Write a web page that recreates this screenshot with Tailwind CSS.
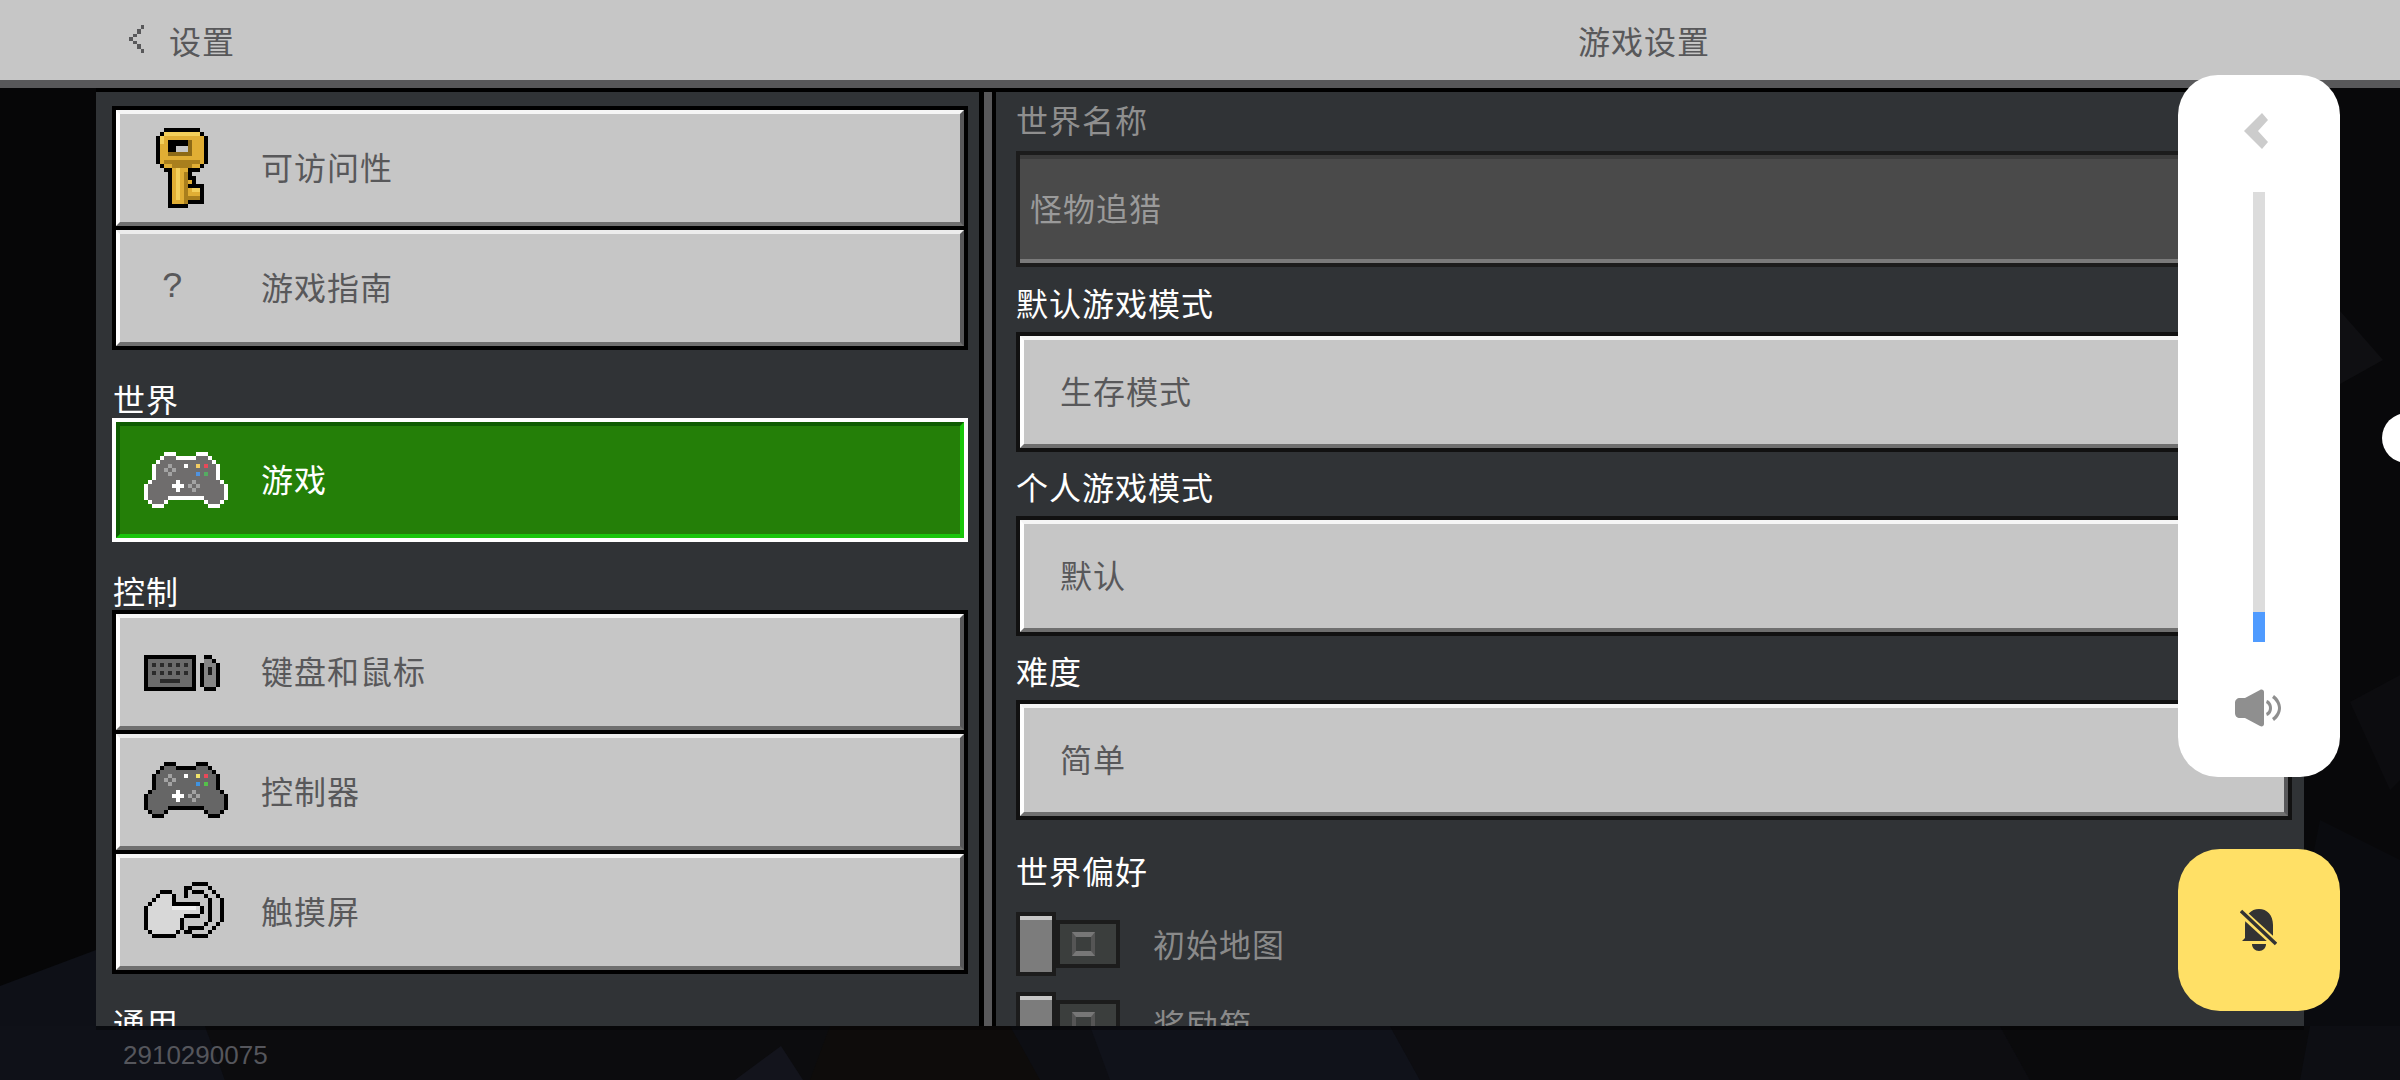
<!doctype html>
<html>
<head>
<meta charset="utf-8">
<script src="https://cdn.jsdelivr.net/npm/@tailwindcss/browser@4"></script>
</head>
<body class="m-0 bg-[#050506]">
<div class="relative w-[2400px] h-[1080px] overflow-hidden bg-[#060607] font-['Noto_Sans_CJK_SC','Noto_Sans',sans-serif] text-[32px] leading-none font-normal tracking-[1px]">

  <!-- blurred world behind the menu -->
  <svg class="absolute left-0 top-0" width="2400" height="1080" viewBox="0 0 2400 1080">
    <polygon points="0,986 96,950 96,1080 0,1080" fill="#0e1017"/>
    <polygon points="2304,88 2400,88 2400,1026 2304,1026" fill="#08080a"/>
    <polygon points="2340,311 2383,360 2340,384" fill="#0f0f12"/>
    <polygon points="2350,702 2400,675 2400,780 2390,790" fill="#0c0c0f"/>
    <polygon points="2320,820 2400,860 2400,1026 2304,1026 2304,900" fill="#0a0b0f"/>
  </svg>

  <!-- header -->
  <header class="relative flex h-[88px] bg-[#c6c6c6] border-b-8 border-[#58585a] text-[#58585a]">
    <div class="flex items-center w-[995px] pl-[128px]">
      <svg width="17" height="28" viewBox="0 0 17 28" fill="#58585a" shape-rendering="crispEdges" class="-mt-[2px]">
        <path d="M13 0h3v4h-3zM9 4h4v5H9zM5 9h4v3H5zM1 12h4v4H1zM5 16h4v3H5zM9 19h4v5H9zM13 24h3v4h-3z"/>
      </svg>
      <span class="ml-6">设置</span>
    </div>
    <div class="flex-1 flex items-center pl-[583px]">游戏设置</div>
  </header>

  <!-- settings columns -->
  <main class="relative flex h-[938px] ml-[96px] w-[2208px] border-t-4 border-black">
    <nav class="w-[883px] h-full overflow-hidden bg-[#303336] pt-[14px] pl-4 pr-[11px] text-white">
      <div class="bg-black pt-1">
        <a class="flex items-center mx-1 h-[116px] border-4 border-t-[#f5f5f5] border-l-white border-r-[#58585a] border-b-[#6f6f6f] bg-[#c6c6c6] text-[#58585a]">
          <span class="flex w-[141px] shrink-0 pl-[36px]">
            <svg width="52" height="80" viewBox="0 0 13 20" shape-rendering="crispEdges">
              <path fill="#000" d="M2 0H11V1H12V2H13V9H12V10H11V11H9V12H10V14H12V19H8V20H3V11H2V10H1V9H0V2H1V1H2Z"/>
              <path fill="#e0ae34" d="M2 1H11V2H12V9H11V10H8V13H9V14H8V15H11V18H8V19H4V10H2V9H1V2H2Z"/>
              <path fill="#f3cf5a" d="M2 1h9v1H2zM1 2h1v2H1zM5 10h1v8H5zM9 15h2v1H9z"/>
              <path fill="#a97f1d" d="M2 8h9v1H9v1H4V9H2zM7 11h1v8H7zM8 17h3v1H8z"/>
              <path fill="#000" d="M3 3h6v4H3z"/>
              <path fill="#8d6a17" d="M8 3h1v4H8zM3 6h6v1H3z"/>
              <path fill="#c6c6c6" d="M5 4.5h3V6H5z"/>
            </svg>
          </span>
          <span class="pb-[4px]">可访问性</span>
        </a>
        <div class="h-[4px]"></div>
        <a class="flex items-center mx-1 h-[116px] border-4 border-t-[#ececec] border-l-white border-r-[#58585a] border-b-[#6f6f6f] bg-[#c6c6c6] text-[#58585a]">
          <span class="flex w-[141px] shrink-0 pl-[42px] text-[36px] font-['Liberation_Mono',monospace]">?</span>
          <span class="pb-[4px]">游戏指南</span>
        </a>
        <div class="h-[4px]"></div>
      </div>

      <h3 class="flex items-end h-[68px] pb-[4px] pl-[1px]">世界</h3>
      <a class="block w-[856px] h-[124px] border-4 border-white">
        <span class="flex items-center h-full bg-[#247f08] border-4 border-t-[#0f5c02] border-l-[#0f5c02] border-r-[#19c60a] border-b-[#19c60a] text-white">
          <span class="flex w-[141px] shrink-0 pl-[24px]">
            <svg width="84" height="56" viewBox="0 0 21 14" shape-rendering="crispEdges">
              <polygon fill="#fff" points="5,0 8,0 8,1 13,1 13,0 16,0 16,1 17,1 17,2 18,2 18,3 19,3 19,7 20,7 20,8 21,8 21,12 20,12 20,13 19,13 19,14 16,14 16,13 15,13 15,12 6,12 6,13 5,13 5,14 2,14 2,13 1,13 1,12 0,12 0,8 1,8 1,7 2,7 2,3 3,3 3,2 4,2 4,1 5,1"/>
              <polygon fill="#6f6d6d" points="5,1 8,1 8,2 13,2 13,1 16,1 16,2 17,2 17,3 18,3 18,7 19,7 19,8 20,8 20,12 19,12 19,13 16,13 16,12 15,12 15,11 6,11 6,12 5,12 5,13 2,13 2,12 1,12 1,8 2,8 2,7 3,7 3,3 4,3 4,2 5,2"/>
              <path fill="#a3a3a3" d="M6 3h1v1H6zM5 4h1v1H5zM7 4h1v1H7zM6 5h1v1H6zM12 7h1v1h-1zM11 8h1v1h-1zM13 8h1v1h-1zM12 9h1v1h-1z"/>
              <path fill="#fff" d="M10 3h1v1h-1zM8 7h1v1h1v1H9v1H8V9H7V8h1z"/>
              <path fill="#f2cc63" d="M13 3h1v1h-1z"/><path fill="#e8495a" d="M15 3h1v1h-1z"/>
              <path fill="#4f93e0" d="M13 5h1v1h-1z"/><path fill="#55ab62" d="M15 5h1v1h-1z"/>
            </svg>
          </span>
          <span class="pb-[4px]">游戏</span>
        </span>
      </a>

      <h3 class="flex items-end h-[68px] pb-[4px] pl-[1px]">控制</h3>
      <div class="bg-black pt-1">
        <a class="flex items-center mx-1 h-[116px] border-4 border-t-[#f5f5f5] border-l-white border-r-[#58585a] border-b-[#6f6f6f] bg-[#c6c6c6] text-[#58585a]">
          <span class="flex w-[141px] shrink-0 pl-[24px]">
            <svg width="76" height="37" viewBox="0 0 19 9" shape-rendering="crispEdges">
              <path fill="#000" d="M0 0h13v9H0z"/>
              <path fill="#6b6b6b" d="M1 1h11v7H1z"/>
              <path fill="#2b2b2b" d="M2 2h1v1H2zM4 2h1v1H4zM6 2h1v1H6zM8 2h1v1H8zM10 2h1v1h-1zM2 4h1v1H2zM4 4h1v1H4zM6 4h1v1H6zM8 4h1v1H8zM10 4h1v1h-1zM4 6h5v1H4z"/>
              <path fill="#000" d="M15 0h2v1h1v1h1v6h-1v1h-3V8h-1V2h1z"/>
              <path fill="#858585" d="M15 2h3v6h-3zM15 1h2v1h-2z"/>
              <path fill="#1c1c1c" d="M16 3h1v2h-1z"/>
            </svg>
          </span>
          <span class="pb-[4px]">键盘和鼠标</span>
        </a>
        <div class="h-[4px]"></div>
        <a class="flex items-center mx-1 h-[116px] border-4 border-t-[#ececec] border-l-white border-r-[#58585a] border-b-[#6f6f6f] bg-[#c6c6c6] text-[#58585a]">
          <span class="flex w-[141px] shrink-0 pl-[24px]">
            <svg width="84" height="56" viewBox="0 0 21 14" shape-rendering="crispEdges" class="-mt-1">
              <polygon fill="#000" points="5,0 8,0 8,1 13,1 13,0 16,0 16,1 17,1 17,2 18,2 18,3 19,3 19,7 20,7 20,8 21,8 21,12 20,12 20,13 19,13 19,14 16,14 16,13 15,13 15,12 6,12 6,13 5,13 5,14 2,14 2,13 1,13 1,12 0,12 0,8 1,8 1,7 2,7 2,3 3,3 3,2 4,2 4,1 5,1"/>
              <polygon fill="#666" points="5,1 8,1 8,2 13,2 13,1 16,1 16,2 17,2 17,3 18,3 18,7 19,7 19,8 20,8 20,12 19,12 19,13 16,13 16,12 15,12 15,11 6,11 6,12 5,12 5,13 2,13 2,12 1,12 1,8 2,8 2,7 3,7 3,3 4,3 4,2 5,2"/>
              <path fill="#a3a3a3" d="M6 3h1v1H6zM5 4h1v1H5zM7 4h1v1H7zM6 5h1v1H6zM12 7h1v1h-1zM11 8h1v1h-1zM13 8h1v1h-1zM12 9h1v1h-1z"/>
              <path fill="#fff" d="M10 3h1v1h-1zM8 7h1v1h1v1H9v1H8V9H7V8h1z"/>
              <path fill="#f0e36b" d="M13 3h1v1h-1z"/><path fill="#e8495a" d="M15 3h1v1h-1z"/>
              <path fill="#3f93e0" d="M13 5h1v1h-1z"/><path fill="#55c04a" d="M15 5h1v1h-1z"/>
            </svg>
          </span>
          <span class="pb-[4px]">控制器</span>
        </a>
        <div class="h-[4px]"></div>
        <a class="flex items-center mx-1 h-[116px] border-4 border-t-[#f5f5f5] border-l-white border-r-[#58585a] border-b-[#6f6f6f] bg-[#c6c6c6] text-[#58585a]">
          <span class="flex w-[141px] shrink-0 pl-[24px]">
            <svg width="80" height="56" viewBox="0 0 20 14" shape-rendering="crispEdges" class="-mt-1">
              <path fill="#d8d8d8" d="M4 3h3v3h7v2H10v1H9v3H8v1H2v-1H1V6h1V5h1V4h1z"/>
              <path fill="#f0f0f0" d="M7 6h6v1H7z"/>
              <path fill="#000" d="M4 2h3v1H4zM3 3h1v1H3zM2 4h1v1H2zM1 5h1v1H1zM0 6h1v6H0zM1 12h1v1H1zM2 13h6v1H2zM8 12h1v1H8zM9 9h1v3H9zM10 8h4v1h-4zM14 6h1v2h-1zM7 5h7v1H7zM7 3h1v2H7z"/>
              <path fill="#000" d="M12 0h4v1h-4zM16 1h1v1h-1zM17 2h1v1h-1zM18 3h1v1h-1zM19 4h1v6h-1zM18 10h1v1h-1zM17 11h1v1h-1zM16 12h1v1h-1zM12 13h4v1h-4zM10 12h2v1h-2zM10 1h2v1h-2zM10 2h1v2h-1zM12 2h3v1h-3zM15 3h1v1h-1zM16 4h1v6h-1zM15 10h1v1h-1zM11 11h4v1h-4z"/>
            </svg>
          </span>
          <span class="pb-[4px]">触摸屏</span>
        </a>
        <div class="h-[4px]"></div>
      </div>
      <h3 class="flex items-end h-[68px] pb-[4px] pl-[1px]">通用</h3>
    </nav>

    <div class="w-[5px] bg-black"></div>
    <div class="w-[8px] bg-[#58585a]"></div>
    <div class="w-[4px] bg-black"></div>

    <section class="flex-1 h-full overflow-hidden bg-[#303336] pl-[20px] pr-[12px]">
      <label class="flex items-end h-[59px] pb-[16px] text-[#8f8f8f]">世界名称</label>
      <div class="h-[116px] border-4 border-[#1c1c1c]">
        <div class="flex items-center h-full pl-[10px] pb-[4px] bg-[#4a4a4a] border-t-4 border-t-[#3c3c3c] border-b-4 border-b-[#7a7a7a] text-[#9a9a9a]">怪物追猎</div>
      </div>

      <label class="flex items-end h-[65px] pb-[14px] text-white">默认游戏模式</label>
      <div class="border-4 border-[#111] bg-[#c6c6c6]">
        <div class="flex items-center h-[112px] pl-[36px] pb-[4px] border-4 border-t-[#f5f5f5] border-l-white border-r-[#58585a] border-b-[#6f6f6f] text-[#58585a]">生存模式</div>
      </div>

      <label class="flex items-end h-[64px] pb-[14px] text-white">个人游戏模式</label>
      <div class="border-4 border-[#111] bg-[#c6c6c6]">
        <div class="flex items-center h-[112px] pl-[36px] pb-[4px] border-4 border-t-[#f5f5f5] border-l-white border-r-[#58585a] border-b-[#6f6f6f] text-[#58585a]">默认</div>
      </div>

      <label class="flex items-end h-[64px] pb-[14px] text-white">难度</label>
      <div class="border-4 border-[#111] bg-[#c6c6c6]">
        <div class="flex items-center h-[112px] pl-[36px] pb-[4px] border-4 border-t-[#f5f5f5] border-l-white border-r-[#58585a] border-b-[#6f6f6f] text-[#58585a]">简单</div>
      </div>

      <h4 class="flex items-end h-[68px] pb-[2px] text-white">世界偏好</h4>
      <div class="flex items-center mt-[24px] h-[64px] text-[#8a8a8a]">
        <span class="w-10 h-[64px] border-4 border-[#1c1c1c] bg-[#7c7c7c]"><span class="block h-1 bg-[#c6c6c6]"></span></span>
        <span class="flex items-center pl-[12px] w-[64px] h-[48px] border-4 border-[#1c1c1c] bg-[#3b3e3d]"><span class="w-[23px] h-[24px] border-x-4 border-y-[5px] border-x-[#555] border-y-[#777]"></span></span>
        <span class="ml-[33px] pb-[2px]">初始地图</span>
      </div>
      <div class="flex items-center mt-[16px] h-[64px] text-[#8a8a8a]">
        <span class="w-10 h-[64px] border-4 border-[#1c1c1c] bg-[#7c7c7c]"><span class="block h-1 bg-[#c6c6c6]"></span></span>
        <span class="flex items-center pl-[12px] w-[64px] h-[48px] border-4 border-[#1c1c1c] bg-[#3b3e3d]"><span class="w-[23px] h-[24px] border-x-4 border-y-[5px] border-x-[#555] border-y-[#777]"></span></span>
        <span class="ml-[33px] pb-[2px]">奖励箱</span>
      </div>
    </section>
  </main>

  <!-- bottom strip with build number -->
  <footer class="absolute left-0 top-[1026px] w-[2400px] h-[54px] bg-[#0d0e13] font-['Liberation_Sans',sans-serif] text-[26px] tracking-normal text-[#55565c]">
    <svg class="absolute left-0 top-0" width="2400" height="54" viewBox="0 0 2400 54">
      <polygon points="0,0 205,0 225,54 0,54" fill="#0f1118"/>
      <polygon points="205,0 1000,0 980,54 225,54" fill="#0c0c0e"/>
      <polygon points="735,54 781,20 803,54" fill="#13141c"/>
      <polygon points="830,0 1010,0 1040,54 810,54" fill="#0e0c0b"/>
      <polygon points="1090,0 1390,0 1420,54 1110,54" fill="#10121a"/>
      <polygon points="1390,0 2000,0 2030,54 1420,54" fill="#0d0d11"/>
      <polygon points="2000,0 2310,0 2300,54 2030,54" fill="#0a0a0c"/>
      <rect x="96" y="0" width="2208" height="4" fill="#000" fill-opacity="0.35"/>
    </svg>
    <span class="absolute left-[123px] top-[16px]">2910290075</span>
  </footer>

  <!-- floating overlay widgets -->
  <div class="absolute left-[2382px] top-[413px] w-[50px] h-[50px] rounded-full bg-white"></div>
  <aside class="absolute left-[2178px] top-[75px] w-[162px] h-[702px] rounded-[40px] bg-white">
    <svg class="absolute left-[66px] top-[38px]" width="24" height="36" viewBox="0 0 24 36"><path d="M24 7 14 18l10 11-6 7L0 18 18 0z" fill="#cccccc"/></svg>
    <div class="absolute left-[75px] top-[117px] w-3 h-[450px] bg-[#dcdcdc]">
      <div class="absolute left-0 bottom-0 w-3 h-[30px] bg-[#4f9bff]"></div>
    </div>
    <svg class="absolute left-[57px] top-[614px]" width="46" height="38" viewBox="0 0 46 38" fill="#8f8f8f">
      <path d="M5 9h5L25 1c2-1 4 0 4 2v32c0 2-2 3-4 2L10 29H5c-3 0-5-2-5-5V14c0-3 2-5 5-5z"/>
      <path d="M32 11c3 1 5 4 5 8s-2 7-5 8l-1-3c2-1 3-3 3-5s-1-4-3-5z"/>
      <path d="M39 6c4 3 7 8 7 13s-3 10-7 13l-2-3c3-2 6-6 6-10s-3-8-6-10z"/>
    </svg>
  </aside>
  <aside class="absolute left-[2178px] top-[849px] w-[162px] h-[162px] rounded-[42px] bg-[#ffe066]">
    <svg class="absolute left-[62px] top-[59px]" width="37" height="43" viewBox="0 0 37 43" fill="#333333">
      <path d="M5 30V17C5 7 11 1 19 1s14 6 14 16v13l3 3H2z"/>
      <path d="M12 36h14c0 4-3 7-7 7s-7-3-7-7z"/>
      <path d="M0 3 36 36" stroke="#ffe066" stroke-width="8" fill="none"/>
      <path d="M1 3 36 36" stroke="#333333" stroke-width="3.5" fill="none"/>
    </svg>
  </aside>
</div>
</body>
</html>
